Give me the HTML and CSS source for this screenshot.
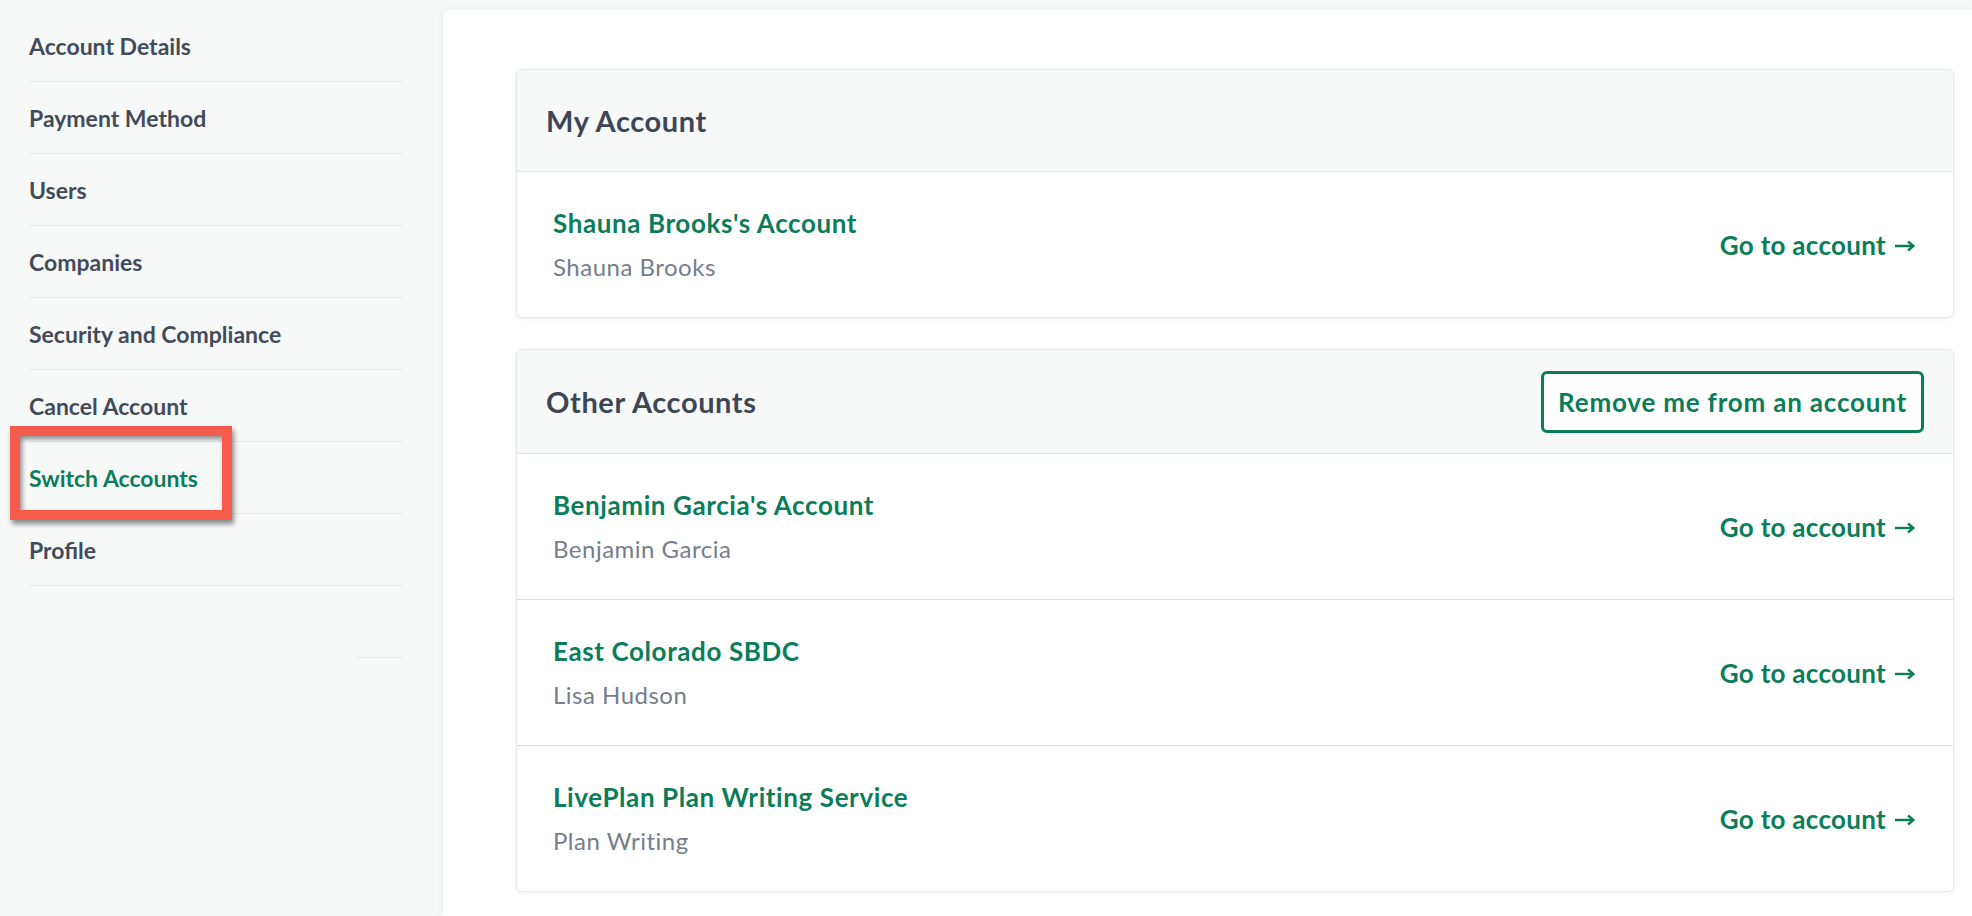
FILE: index.html
```html
<!DOCTYPE html>
<html lang="en">
<head>
<meta charset="utf-8">
<title>Switch Accounts</title>
<link rel="stylesheet" href="styles.css">
</head>
<body>
<div class="layout">
  <aside class="sidebar">
    <nav class="nav">
      <a class="nav-item">Account Details</a>
      <a class="nav-item">Payment Method</a>
      <a class="nav-item">Users</a>
      <a class="nav-item">Companies</a>
      <a class="nav-item">Security and Compliance</a>
      <a class="nav-item">Cancel Account</a>
      <a class="nav-item active">Switch Accounts</a>
      <a class="nav-item">Profile</a>
      <div class="nav-stub"></div>
    </nav>
    <div class="highlight"></div>
  </aside>
  <main class="panel">
    <section class="card">
      <header class="card-head">
        <h2 class="card-title">My Account</h2>
      </header>
      <div class="row">
        <div class="row-info">
          <div class="row-title">Shauna Brooks's Account</div>
          <div class="row-sub">Shauna Brooks</div>
        </div>
        <a class="go">Go to account <svg class="arrow" viewBox="0 0 20 12" width="20" height="12"><path d="M0 6H18" /><path d="M13 1.5L18.5 6L13 10.5" /></svg></a>
      </div>
    </section>
    <section class="card">
      <header class="card-head tall">
        <h2 class="card-title">Other Accounts</h2>
        <button class="btn-outline">Remove me from an account</button>
      </header>
      <div class="row">
        <div class="row-info">
          <div class="row-title">Benjamin Garcia's Account</div>
          <div class="row-sub">Benjamin Garcia</div>
        </div>
        <a class="go">Go to account <svg class="arrow" viewBox="0 0 20 12" width="20" height="12"><path d="M0 6H18" /><path d="M13 1.5L18.5 6L13 10.5" /></svg></a>
      </div>
      <div class="row">
        <div class="row-info">
          <div class="row-title">East Colorado SBDC</div>
          <div class="row-sub">Lisa Hudson</div>
        </div>
        <a class="go">Go to account <svg class="arrow" viewBox="0 0 20 12" width="20" height="12"><path d="M0 6H18" /><path d="M13 1.5L18.5 6L13 10.5" /></svg></a>
      </div>
      <div class="row">
        <div class="row-info">
          <div class="row-title">LivePlan Plan Writing Service</div>
          <div class="row-sub">Plan Writing</div>
        </div>
        <a class="go">Go to account <svg class="arrow" viewBox="0 0 20 12" width="20" height="12"><path d="M0 6H18" /><path d="M13 1.5L18.5 6L13 10.5" /></svg></a>
      </div>
    </section>
  </main>
</div>
</body>
</html>
```

FILE: styles.css
```css
* { box-sizing: border-box; }

html, body {
  margin: 0;
  padding: 0;
  height: 100%;
  overflow: hidden;
}

body {
  background: #f7f9f9;
  font-family: "Lato", "Noto Sans", sans-serif;
  color: #424a59;
}

.layout {
  display: flex;
  height: 916px;
}

.sidebar {
  position: relative;
  width: 443px;
  flex: none;
  padding: 10px 40px 0 29px;
}

.nav {
  display: flex;
  flex-direction: column;
}

.nav-item {
  display: flex;
  align-items: center;
  height: 72px;
  border-bottom: 1px solid #e6e9e9;
  font-size: 23px;
  font-weight: 700;
  color: #434b5a;
  text-decoration: none;
}

.nav-item.active {
  color: #0b7d5a;
}

.nav-stub {
  height: 72px;
  width: 47px;
  margin-left: auto;
  border-bottom: 1px solid #e6e9e9;
}

.highlight {
  position: absolute;
  left: 10px;
  top: 426px;
  width: 222px;
  height: 94px;
  border: 10px solid #f65c4b;
  box-shadow: 2px 4px 5px rgba(0, 0, 0, 0.45), inset 2px 3px 5px rgba(0, 0, 0, 0.45);
}

.panel {
  flex: 1;
  margin-top: 10px;
  background: #ffffff;
  border-top-left-radius: 6px;
  box-shadow: 0 0 6px rgba(0, 0, 0, 0.07);
  padding: 59px 18px 0 73px;
  display: flex;
  flex-direction: column;
  gap: 31px;
}

.card {
  border: 1px solid #e5e7e8;
  border-radius: 6px;
  background: #ffffff;
  box-shadow: 0 1px 4px rgba(0, 0, 0, 0.07);
  overflow: hidden;
}

.card-head {
  height: 102px;
  background: #f7f8f8;
  border-bottom: 1px solid #e3e5e6;
  display: flex;
  align-items: center;
  justify-content: space-between;
  padding: 0 29px 0 29px;
}

.card-head.tall {
  height: 104px;
}

.card-title {
  margin: 0;
  font-size: 29px;
  font-weight: 700;
  letter-spacing: 0.6px;
  color: #3e4656;
}

.btn-outline {
  height: 62px;
  padding: 0 14px;
  background: #ffffff;
  border: 3px solid #0b7d5a;
  border-radius: 6px;
  color: #0b7d5a;
  font-family: inherit;
  font-size: 26px;
  font-weight: 700;
  letter-spacing: 0.8px;
}

.row {
  height: 146px;
  display: flex;
  align-items: center;
  justify-content: space-between;
  padding: 0 38px 0 36px;
  border-top: 1px solid #d9dcdd;
}

.card-head + .row {
  height: 145px;
  border-top: none;
}

.row-info {
  display: flex;
  flex-direction: column;
  gap: 14px;
}

.row-title {
  font-size: 26px;
  font-weight: 700;
  letter-spacing: 0.6px;
  color: #0b7d5a;
  line-height: 30px;
}

.row-sub {
  font-size: 24px;
  font-weight: 400;
  letter-spacing: 0.5px;
  color: #767d8b;
  line-height: 30px;
}

.go {
  display: inline-flex;
  align-items: center;
  gap: 9px;
  font-size: 26px;
  font-weight: 700;
  letter-spacing: 0.3px;
  color: #0b7d5a;
  text-decoration: none;
}

.arrow {
  fill: none;
  stroke: #0b7d5a;
  stroke-width: 2.4;
  margin-top: 2px;
}
```
